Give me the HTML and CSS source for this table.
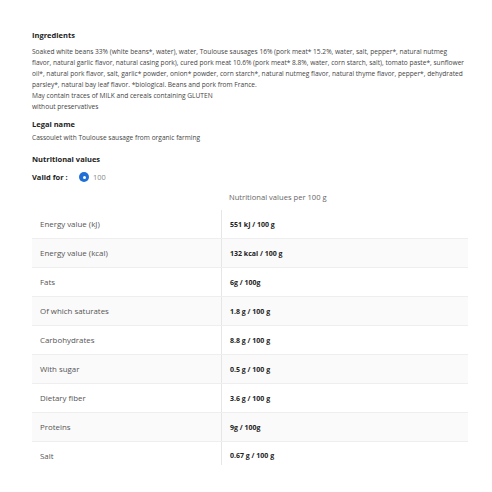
FILE: index.html
```
<!DOCTYPE html>
<html>
<head>
<meta charset="utf-8">
<link rel="stylesheet" href="styles.css">
</head>
<body>
<div class="page">
  <section class="block ingr">
    <h2 class="title">Ingredients</h2>
    <p class="text">Soaked white beans 33% (white beans*, water), water, Toulouse sausages 16% (pork meat* 15.2%, water, salt, pepper*, natural nutmeg<br>flavor, natural garlic flavor, natural casing pork), cured pork meat 10.6% (pork meat* 8.8%, water, corn starch, salt), tomato paste*, sunflower<br>oil*, natural pork flavor, salt, garlic* powder, onion* powder, corn starch*, natural nutmeg flavor, natural thyme flavor, pepper*, dehydrated<br>parsley*, natural bay leaf flavor. *biological. Beans and pork from France.<br>May contain traces of MILK and cereals containing GLUTEN<br>without preservatives</p>
  </section>
  <section class="block legal">
    <h2 class="title">Legal name</h2>
    <p class="text">Cassoulet with Toulouse sausage from organic farming</p>
  </section>
  <section class="block nutri">
    <h2 class="title">Nutritional values</h2>
    <div class="valid">
      <span class="valid-label">Valid for :</span>
      <span class="radio"><span class="radio-dot"></span></span>
      <span class="valid-value">100</span>
    </div>
    <div class="table">
      <div class="row head"><div class="cell name"></div><div class="cell val">Nutritional values per 100 g</div></div>
      <div class="row"><div class="cell name">Energy value (kJ)</div><div class="cell val">551 kJ / 100 g</div></div>
      <div class="row alt"><div class="cell name">Energy value (kcal)</div><div class="cell val">132 kcal / 100 g</div></div>
      <div class="row"><div class="cell name">Fats</div><div class="cell val">6g / 100g</div></div>
      <div class="row alt"><div class="cell name">Of which saturates</div><div class="cell val">1.8 g / 100 g</div></div>
      <div class="row"><div class="cell name">Carbohydrates</div><div class="cell val">8.8 g / 100 g</div></div>
      <div class="row alt"><div class="cell name">With sugar</div><div class="cell val">0.5 g / 100 g</div></div>
      <div class="row"><div class="cell name">Dietary fiber</div><div class="cell val">3.6 g / 100 g</div></div>
      <div class="row alt"><div class="cell name">Proteins</div><div class="cell val">9g / 100g</div></div>
      <div class="row last"><div class="cell name">Salt</div><div class="cell val">0.67 g / 100 g</div></div>
    </div>
  </section>
</div>
</body>
</html>
```
FILE: styles.css
```
html, body {
  margin: 0;
  padding: 0;
  background: #fff;
}
body {
  font-family: "Open Sans", "Noto Sans", sans-serif;
  color: #333;
}
.page {
  padding: 29px 24px 0 32px;
}
.block.ingr {
  margin-bottom: 6px;
}
.block.legal {
  margin-bottom: 10px;
}
.title {
  margin: 0 0 5px 0;
  font-size: 7.5px;
  line-height: 12px;
  font-weight: 700;
  color: #222;
}
.legal .title {
  margin-bottom: 2px;
}
.text {
  margin: 0;
  font-size: 6.6px;
  line-height: 11px;
  color: #444;
  white-space: nowrap;
}
.nutri .title {
  margin-bottom: 5px;
}
.valid {
  display: flex;
  align-items: center;
  height: 14px;
}
.valid-label {
  font-size: 7.5px;
  font-weight: 700;
  color: #222;
  width: 47px;
}
.radio {
  width: 10px;
  height: 10px;
  border-radius: 50%;
  background: #1f6fd6;
  display: flex;
  align-items: center;
  justify-content: center;
}
.radio-dot {
  width: 3px;
  height: 3px;
  border-radius: 50%;
  background: #fff;
}
.valid-value {
  margin-left: 4px;
  font-size: 7.4px;
  color: #888;
}
.table {
  margin-top: 6px;
  width: 436px;
}
.row {
  display: grid;
  grid-template-columns: 189px 1fr;
  height: 29px;
  border-bottom: 1px solid #eeeeee;
  box-sizing: border-box;
}
.row.alt {
  background: #fafafa;
}
.row.head {
  height: 20px;
  border-bottom: none;
}
.row.last {
  height: 23px;
  border-bottom: none;
}
.cell {
  display: flex;
  align-items: center;
}
.cell.name {
  padding-left: 8px;
  color: #555;
  font-size: 7.9px;
}
.cell.val {
  padding-left: 8px;
  border-left: 1px solid #e6e6e6;
  font-weight: 700;
  color: #222;
  font-size: 7px;
}
.row.head .cell.val {
  border-left: none;
  font-weight: 400;
  color: #666;
  font-size: 7.6px;
  align-items: flex-start;
  padding-top: 2px;
}
.row.last .cell {
  align-items: flex-start;
  padding-top: 9px;
}
```
